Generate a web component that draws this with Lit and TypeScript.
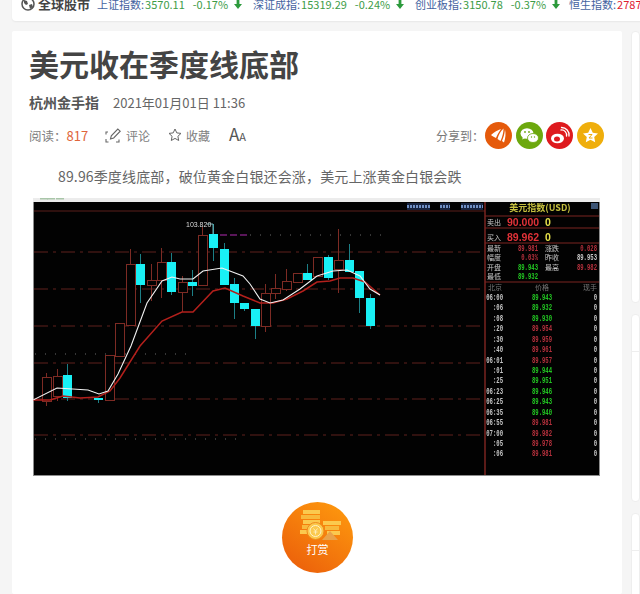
import { LitElement, html, css, svg } from "lit";
import { customElement } from "lit/decorators.js";

const UP = "#7d2b24";
const CY = "#19f0f5";
const COLON = "\uFF1A";
const COMMA = "\uFF0C";
// x, top, bottom, wickTop, wickBottom
const hollow = [
  [42,376,400,372,405],[53,375,395,368,400],[105,354,399,354,399],[115,322,355,322,355],[126,263,324,248,324],
  [147,279,284,263,300],[157,261,279,247,297],[178,281,291,275,311],[198,234,284,226,284],
  [261,292,325,283,331],[271,287,292,273,298],[282,280,288,268,290],[293,272,281,272,281],
  [313,256,275,256,275],[334,259,268,228,292],
];
const cyan = [
  [63,374,397,363,400],[94,397,399,397,402],[136,263,284,253,302],[167,261,291,252,294],[188,281,285,269,295],
  [209,233,247,223,260],[220,248,284,242,284],[230,283,302,277,318],[240,302,308,302,310],[251,308,325,308,338],
  [303,272,279,263,279],[324,256,277,254,279],[345,259,271,243,271],[355,270,297,270,312],[366,297,325,293,328],
];
const whiteMa = "33,399 57,387 88,389 99,393 108,390 118,373 131,345 147,302 162,280 172,276 180,278 193,278 203,270 222,267 243,275 250,283 260,298 270,302 283,299 300,288 317,275 333,270 347,269 360,275 370,288 380,294";
const redMa = "33,399 50,399 63,395 80,397 98,396 110,390 120,377 140,345 162,320 182,311 193,311 213,290 225,287 243,295 260,302 273,302 287,298 303,290 317,281 330,280 340,277 353,277 365,281 380,294";
const ticks: [string, string, string][] = [
  ["06:00","89.943","g"],[":06","89.932","g"],[":08","89.930","g"],[":20","89.954","r"],
  [":30","89.959","r"],[":40","89.961","r"],["06:01","89.957","r"],[":01","89.944","g"],
  [":25","89.951","g"],["06:23","89.946","g"],["06:25","89.943","g"],["06:35","89.940","g"],
  ["06:55","89.981","r"],["07:00","89.982","r"],[":05","89.978","r"],[":06","89.981","r"],
];
const stats: [string, string, string, string, string, string][] = [
  ["最新","89.981","r","涨跌","0.028","r"],
  ["幅度","0.03%","r","昨收","89.953","w"],
  ["开盘","89.943","g","最高","89.982","r"],
  ["最低","89.932","g","",  "", "w"],
];
const colorOf = (k: string) => (k === "g" ? "#22c522" : k === "r" ? "#b4303c" : "#c8c8c8");

// Condensed bitmap-style digits of the quote panel.
const num = (x: number, y: number, anchor: string, color: string, t: string) =>
  t ? svg`<text x=${x} y=${y} text-anchor=${anchor} class="num" fill=${color} textLength=${t.length * 3.35} lengthAdjust="spacingAndGlyphs">${t}</text>` : "";

const indexes = [
  { n: "上证指数:", v: "3570.11", p: "-0.17%", down: true },
  { n: "深证成指:", v: "15319.29", p: "-0.24%", down: true },
  { n: "创业板指:", v: "3150.78", p: "-0.37%", down: true },
  { n: "恒生指数:", v: "27872.40", p: "", down: false },
];

function chart() {
  return html`<svg class="chart" viewBox="33 197 567 278" width="567" height="278" xmlns="http://www.w3.org/2000/svg">
    <rect x="33" y="197" width="567" height="278" fill="#8d8d8d"/>
    <rect x="33" y="197" width="567" height="4" fill="#ececec"/>
    <rect x="34" y="201" width="565" height="273" fill="#020202"/>
    ${[[40,8],[47,8],[56,8]].map(([x, w]) => svg`<rect x=${x} y="197" width=${w} height="1.5" fill="#a9c6a9"/>`)}
    <line x1="34" x2="485" y1="210" y2="210" stroke="#5a1e1a" stroke-width="1.2"/>
    ${[251,288,325,362,398,434].map(y => svg`<line x1="34" x2="485" y1=${y} y2=${y} stroke="#5e211c" stroke-dasharray="14 5 3 5" stroke-width="1"/>`)}
    <line x1="250" x2="383" y1="234" y2="234" stroke="#6a6a6a" stroke-dasharray="1 9"/>
    <line x1="35" x2="193" y1="353" y2="353" stroke="#6a6a6a" stroke-dasharray="1 9"/>
    <line x1="35" x2="245" y1="438" y2="438" stroke="#6a6a6a" stroke-dasharray="1 9"/>
    <line x1="220" x2="250" y1="234" y2="234" stroke="#b12bb1" stroke-dasharray="7 3"/>
    ${hollow.map(([x,t,b,wt,wb]) => svg`
      <line x1=${x+4.5} x2=${x+4.5} y1=${wt} y2=${t} stroke=${UP}/>
      <line x1=${x+4.5} x2=${x+4.5} y1=${b} y2=${wb} stroke=${UP}/>
      <rect x=${x+.5} y=${t+.5} width="9" height=${b-t} fill="#020202" stroke=${UP}/>`)}
    ${cyan.map(([x,t,b,wt,wb]) => svg`
      <line x1=${x+4.5} x2=${x+4.5} y1=${wt} y2=${wb} stroke="#1c7f86"/>
      <rect x=${x} y=${t} width="9" height=${Math.max(b-t,2)} fill=${CY}/>`)}
    <polyline points=${redMa} fill="none" stroke="#b3201c" stroke-width="1.5"/>
    <polyline points=${whiteMa} fill="none" stroke="#f2f2f2" stroke-width="1.1"/>
    <polyline points="207,223 213,223 213,233" fill="none" stroke="#8fd4dc" stroke-width=".8"/>
    <text x="186" y="225.5" class="lbl" fill="#dcdcdc">103.820</text>
    ${[[407,23],[440,10],[461,22]].map(([x,w]) => svg`
      <rect x=${x} y="202" width=${w} height="7" fill="#16233f"/>
      <line x1=${x} x2=${x+w} y1="205.5" y2="205.5" stroke="#6f8fc4" stroke-dasharray="2 1" stroke-width="3"/>`)}
    <line x1="485" x2="485" y1="201" y2="474" stroke="#7a2420" stroke-width="1.5"/>
    <rect x="591" y="202" width="7" height="6" fill="#3c5474"/>
    <text x="540" y="210" text-anchor="middle" class="ttl">美元指数(USD)</text>
    ${[215,227,242,281].map(y => svg`<line x1="485" x2="599" y1=${y} y2=${y} stroke="#7a2420"/>`)}
    <text x="487" y="223.5" class="cn" fill="#c8c8c8">卖出</text>
    <text x="487" y="238.5" class="cn" fill="#c8c8c8">买入</text>
    <text x="507" y="225" class="big" fill="#e03238">90.000</text>
    <text x="507" y="240" class="big" fill="#e03238">89.962</text>
    <text x="545" y="225" class="big" fill="#e4e04a">0</text>
    <text x="545" y="240" class="big" fill="#e4e04a">0</text>
    ${stats.map((r, i) => { const y = 250 + i * 9.4; return svg`
      <text x="487" y=${y} class="cn" fill="#c8c8c8">${r[0]}</text>
      ${num(538, y, "end", colorOf(r[2]), r[1])}
      <text x="545" y=${y} class="cn" fill="#c8c8c8">${r[3]}</text>
      ${num(597, y, "end", colorOf(r[5]), r[4])}`; })}
    <text x="488" y="289" class="cn" fill="#777">北京</text>
    <text x="542" y="289" text-anchor="middle" class="cn" fill="#777">价格</text>
    <text x="597" y="289" text-anchor="end" class="cn" fill="#777">现手</text>
    ${ticks.map((t, i) => { const y = 299 + i * 10.43; return svg`
      ${num(503, y, "end", "#c4c4c4", t[0])}
      ${num(542, y, "middle", colorOf(t[2]), t[1])}
      ${num(597, y, "end", "#c4c4c4", "0")}`; })}
  </svg>`;
}

const arrow = html`<svg class="arrow" width="8" height="10" viewBox="0 0 8 10"><path d="M2.6 0h2.8v5H8L4 10 0 5h2.6z" fill="#2c9a3c"/></svg>`;

@customElement("app-root")
export class AppRoot extends LitElement {
  static styles = css`
    :host { display: block; width: 640px; height: 594px; overflow: hidden; background: #f5f5f5;
      font-family: "Noto Sans CJK SC", "Noto Sans", sans-serif; color: #666; }
    .topbar { margin: -10px 0 10px 12px; width: 720px; height: 31px; box-sizing: border-box; background: #fff;
      border-radius: 4px; box-shadow: 0 1px 2px rgba(0,0,0,.06); display: flex; align-items: flex-end;
      padding: 0 0 10px 9px; white-space: nowrap; overflow: hidden; }
    .brand { display: flex; align-items: center; gap: 3px; width: 76px; flex: none; font-size: 13px; font-weight: 700;
      color: #444; line-height: 14px; }
    .idx { display: flex; align-items: center; flex: none; font-size: 11px; line-height: 14px; }
    .idx .n { color: #45639f; margin-right: 1px; }
    .idx .v { color: #3d9c48; }
    .idx .p { color: #3d9c48; margin: 0 6px 0 8px; }
    .idx.up .v { color: #e0202f; }
    .i0 { width: 156px; } .i1 { width: 162px; } .i2 { width: 154px; }
    .columns { display: grid; grid-template-columns: 610px 1fr; column-gap: 9px; margin-left: 12px; }
    .main { background: #fff; height: 563px; padding: 14px 17px 0; box-sizing: border-box; border-radius: 2px; }
    h1 { margin: 0; font-size: 30px; line-height: 36px; font-weight: 700; color: #444; }
    .author { display: flex; align-items: center; gap: 14px; height: 20px; margin-top: 11px; }
    .author b { font-size: 14px; color: #555; font-weight: 700; }
    .author span { font-size: 13px; color: #666; }
    .meta { display: flex; align-items: center; height: 20px; margin-top: 13px; font-size: 12px; color: #808080; width: 575px; }
    .meta .read { width: 76px; flex: none; white-space: nowrap; font-size: 12.5px; }
    .meta .read em { font-style: normal; color: #e0653a; font-size: 13px; }
    .act { display: flex; align-items: center; gap: 4px; flex: none; }
    .act.c { width: 63px; } .act.s { width: 61px; }
    .aa { color: #555; font-size: 17px; line-height: 20px; }
    .aa small { font-size: 11px; }
    .share { margin-left: auto; display: flex; align-items: center; gap: 3.67px; color: #777; font-size: 12px; }
    .share .lab { margin-right: -2.67px; }
    .share svg { display: block; }
    p { margin: 19px 0 0; font-size: 14px; line-height: 24px; color: #666; text-indent: 29px; letter-spacing: .15px; }
    .pic { margin: 10px 0 0 4px; width: 567px; height: 278px; }
    .chart { display: block; filter: blur(.35px); }
    .chart .lbl { font: 7px "Liberation Sans", sans-serif; }
    .chart .ttl { font: 700 9px "Noto Sans CJK SC", serif; fill: #c6c03e; }
    .chart .cn { font: 7px "Noto Sans CJK SC", sans-serif; }
    .chart .big { font: 700 10.5px "Liberation Sans", sans-serif; }
    .chart .num { font: 700 9px "Liberation Mono", monospace; }
    .tip { margin: 26px 0 0 253px; width: 71px; height: 71px; border-radius: 50%; color: #fff;
      background: linear-gradient(35deg, #ea5a0a, #ff9d0e); display: flex; flex-direction: column; align-items: center;
      padding-top: 7px; box-sizing: border-box; font-size: 11px; line-height: 15px; }
    .tip svg { display: block; margin-bottom: 1px; }
    .side { display: flex; flex-direction: column; gap: 11px; }
    .box { background: #fff; border-radius: 4px; border: 1px solid #eee; box-sizing: border-box; }
    .b1 { height: 272px; } .b2 { height: 188px; } .b3 { height: 90px; }
    .boxhead { height: 36px; border-bottom: 1px solid #eee; }
  `;

  render() {
    return html`
      <div class="topbar">
        <div class="brand">
          <svg width="14" height="14" viewBox="0 0 14 14"><circle cx="7" cy="7" r="6" fill="none" stroke="#555" stroke-width="1.5"/><path d="M3 3l3 1 1 3-2 1-2-2zM8 8l3-1 1 3-3 2z" fill="#555"/></svg>
          <span>全球股市</span>
        </div>
        ${indexes.map((d, i) => html`
          <div class="idx i${i} ${d.down ? "" : "up"}">
            <span class="n">${d.n}</span><span class="v">${d.v}</span>
            ${d.p ? html`<span class="p">${d.p}</span>` : ""}${d.down ? arrow : ""}
          </div>`)}
      </div>
      <div class="columns">
        <div class="main">
          <h1>美元收在季度线底部</h1>
          <div class="author"><b>杭州金手指</b><span>2021年01月01日 11:36</span></div>
          <div class="meta">
            <div class="read">阅读${COLON}<em>817</em></div>
            <div class="act c">
              <svg width="17" height="15" viewBox="0 0 17 15" fill="none" stroke="#666" stroke-width="1.1">
                <path d="M3 4H1v2.500M1 11v3h2.500M11 14h3v-2.500"/><path d="M5.500 11l.8-3.200L12.800 1l2.400 2.200-6.500 6.800z"/>
              </svg><span>评论</span>
            </div>
            <div class="act s">
              <svg width="14" height="14" viewBox="0 0 14 14" fill="none" stroke="#666" stroke-width="1"><path d="M7 1l1.800 3.900 4.200.5-3.100 2.900.8 4.200L7 10.400 3.300 12.500l.8-4.200L1 5.400l4.200-.5z"/></svg><span>收藏</span>
            </div>
            <div class="aa">A<small>A</small></div>
            <div class="share">
              <span class="lab">分享到${COLON}</span>
              <svg width="27" height="27" viewBox="0 0 27 27"><circle cx="13.500" cy="13.500" r="13.500" fill="#e55a0b"/><path d="M6 13c3-3 7-5 10-6-2 3-4 6-5 9-2-1-4-2-5-3zM12.500 17c1-4 3-8 6-10.500 0 4-1 8-3 12.500zM17 19c1.500-3.500 2.500-7 3-11.500 1 4 .500 9-1 13z" fill="#fff"/></svg>
              <svg width="27" height="27" viewBox="0 0 27 27"><circle cx="13.500" cy="13.500" r="13.500" fill="#6ca80e"/><ellipse cx="11" cy="11.500" rx="6.500" ry="5.200" fill="#fff"/><path d="M7 15l-.8 2.500 3-1.500z" fill="#fff"/><ellipse cx="17" cy="16" rx="5.500" ry="4.500" fill="#fff" stroke="#6ca80e" stroke-width=".8"/><circle cx="9" cy="10" r=".9" fill="#6ca80e"/><circle cx="13" cy="10" r=".9" fill="#6ca80e"/><circle cx="15.500" cy="15" r=".7" fill="#6ca80e"/><circle cx="18.500" cy="15" r=".7" fill="#6ca80e"/></svg>
              <svg width="27" height="27" viewBox="0 0 27 27"><circle cx="13.500" cy="13.500" r="13.500" fill="#de1a1e"/><ellipse cx="11.500" cy="16.500" rx="6.500" ry="4.800" fill="#fff"/><ellipse cx="11" cy="17" rx="3" ry="2.500" fill="#de1a1e"/><path d="M15 8a5 5 0 0 1 5.500 6M15.500 5.500a7.500 7.500 0 0 1 7.500 8.500" fill="none" stroke="#fff" stroke-width="1.300" stroke-linecap="round"/></svg>
              <svg width="27" height="27" viewBox="0 0 27 27"><circle cx="13.500" cy="13.500" r="13.500" fill="#efae0c"/><path d="M13.500 6l2.300 4.800 5.200.7-3.800 3.600 1 5.200-4.700-2.500-4.700 2.500 1-5.200L6 11.500l5.200-.7z" fill="#fff"/><path d="M11.500 12.500h3.500l-3 3.500h3.500" fill="none" stroke="#efae0c" stroke-width="1"/></svg>
            </div>
          </div>
          <p>89.96季度线底部${COMMA}破位黄金白银还会涨${COMMA}美元上涨黄金白银会跌</p>
          <div class="pic">${chart()}</div>
          <div class="tip">
            <svg width="46" height="32" viewBox="0 0 46 32">
              <g fill="#fbc94e">
                <rect x="8" y="1" width="17" height="4"/><rect x="6" y="6" width="19" height="4" fill="#f8b93c"/>
                <rect x="8" y="11" width="17" height="4"/><rect x="7" y="16" width="17" height="4" fill="#f8b93c"/>
                <rect x="5" y="21" width="14" height="4"/>
                <rect x="28" y="12" width="18" height="4"/><rect x="30" y="17" width="14" height="4" fill="#f8b93c"/>
                <rect x="32" y="22" width="13" height="4"/>
                <path d="M27 31l8-9 8 9z" fill="#e9a24a"/>
              </g>
              <circle cx="20.500" cy="22" r="8.500" fill="#fbc94e" stroke="#ee8a1c" stroke-width="1"/>
              <circle cx="20.500" cy="22" r="5.500" fill="none" stroke="#fff3c8" stroke-width="1"/>
              <path d="M18.500 19.500l2 2.500 2-2.500M20.500 22v3.500M18.500 23h4" fill="none" stroke="#fff3c8" stroke-width=".8"/>
            </svg>
            <span>打赏</span>
          </div>
        </div>
        <div class="side">
          <div class="box b1"></div>
          <div class="box b2"><div class="boxhead"></div></div>
          <div class="box b3"><div class="boxhead"></div></div>
        </div>
      </div>`;
  }
}
